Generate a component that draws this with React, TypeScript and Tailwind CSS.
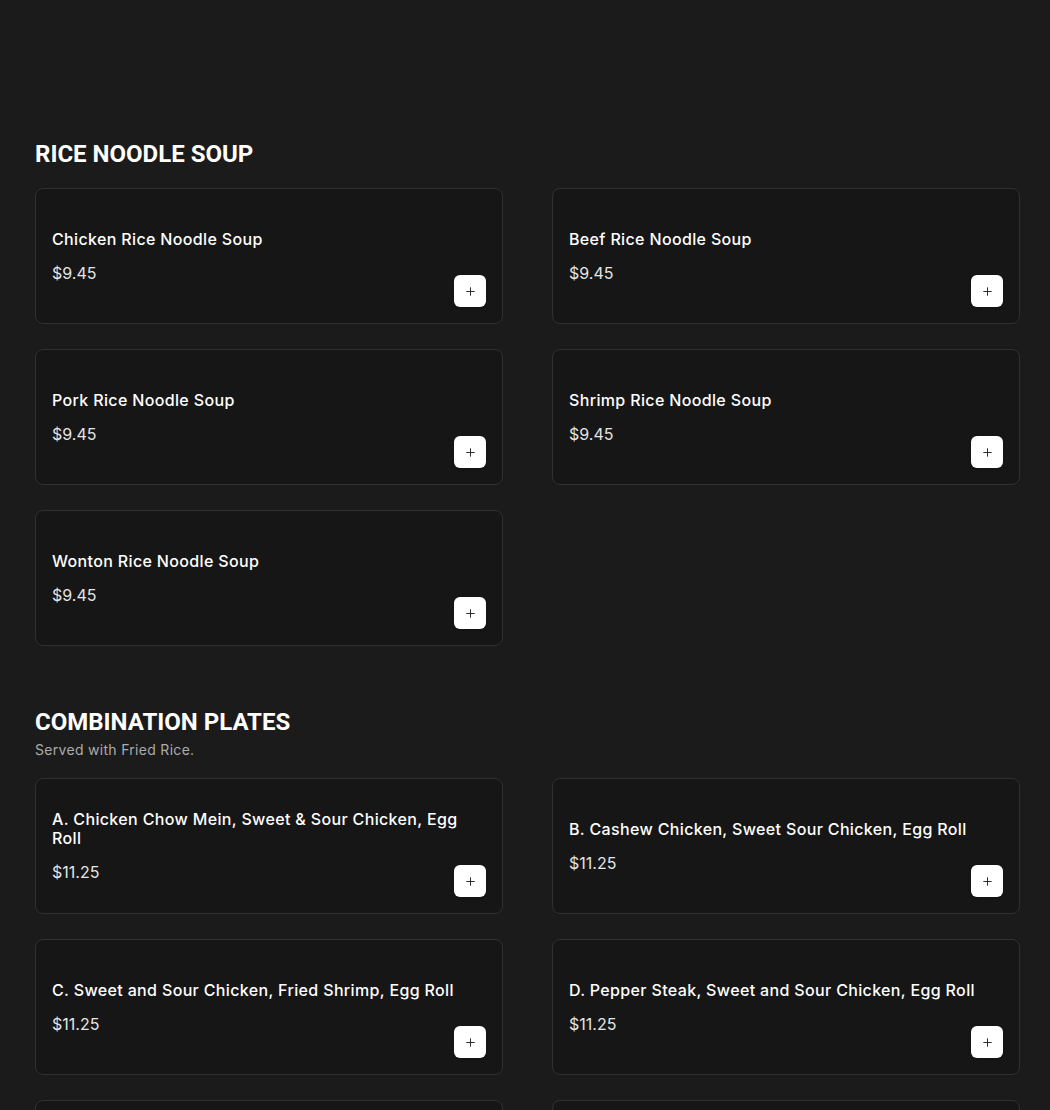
import { Plus } from 'lucide-react'

type Item = { name: string; price: string }

const sections: { title: string; note?: string; items: Item[] }[] = [
    {
        title: 'RICE NOODLE SOUP',
        items: [
            { name: 'Chicken Rice Noodle Soup', price: '$9.45' },
            { name: 'Beef Rice Noodle Soup', price: '$9.45' },
            { name: 'Pork Rice Noodle Soup', price: '$9.45' },
            { name: 'Shrimp Rice Noodle Soup', price: '$9.45' },
            { name: 'Wonton Rice Noodle Soup', price: '$9.45' },
        ],
    },
    {
        title: 'COMBINATION PLATES',
        note: 'Served with Fried Rice.',
        items: [
            { name: 'A. Chicken Chow Mein, Sweet & Sour Chicken, Egg Roll', price: '$11.25' },
            { name: 'B. Cashew Chicken, Sweet Sour Chicken, Egg Roll', price: '$11.25' },
            { name: 'C. Sweet and Sour Chicken, Fried Shrimp, Egg Roll', price: '$11.25' },
            { name: 'D. Pepper Steak, Sweet and Sour Chicken, Egg Roll', price: '$11.25' },
            { name: 'E. Broccoli Beef, Sweet and Sour Chicken, Egg Roll', price: '$11.25' },
            { name: 'F. Kung Pao Chicken, Sweet and Sour Chicken, Egg Roll', price: '$11.25' },
        ],
    },
]

function MenuCard({ item }: { item: Item }) {
    return (
        <div className="relative flex min-h-[136px] items-center rounded-lg border border-[#303030] bg-[#161616] px-4 py-4">
            <div className="flex max-w-[418px] flex-col">
                <div className="text-[16px] font-medium leading-[19px] tracking-[0.35px] text-white">{item.name}</div>
                <div className="mt-[14px] text-[16px] leading-5 text-[#e4e4e4]">{item.price}</div>
            </div>
            <button className="absolute bottom-4 right-4 flex h-8 w-8 items-center justify-center rounded-md bg-white shadow">
                <Plus size={13} strokeWidth={1.75} color="#222" />
            </button>
        </div>
    )
}

export default function App() {
    return (
        <div className="min-h-[1110px] bg-[#1b1b1b] pt-[138px]" style={{ fontFamily: 'Inter, "Noto Sans", sans-serif' }}>
            <div className="w-[985px] pl-[35px] box-content space-y-[60px]">
                {sections.map((section) => (
                    <section key={section.title}>
                        <div className="mb-[18px]">
                            <h2
                                className="text-[24px] font-bold leading-8 text-white"
                                style={{ fontFamily: 'Roboto, "Liberation Sans", sans-serif' }}
                            >
                                {section.title}
                            </h2>
                            {section.note && (
                                <p className="mt-0.5 text-[14px] leading-5 tracking-[0.3px] text-[#ababab]">{section.note}</p>
                            )}
                        </div>
                        <div className="grid grid-cols-2 gap-x-[49px] gap-y-[25px]">
                            {section.items.map((item) => (
                                <MenuCard key={item.name} item={item} />
                            ))}
                        </div>
                    </section>
                ))}
            </div>
        </div>
    )
}
